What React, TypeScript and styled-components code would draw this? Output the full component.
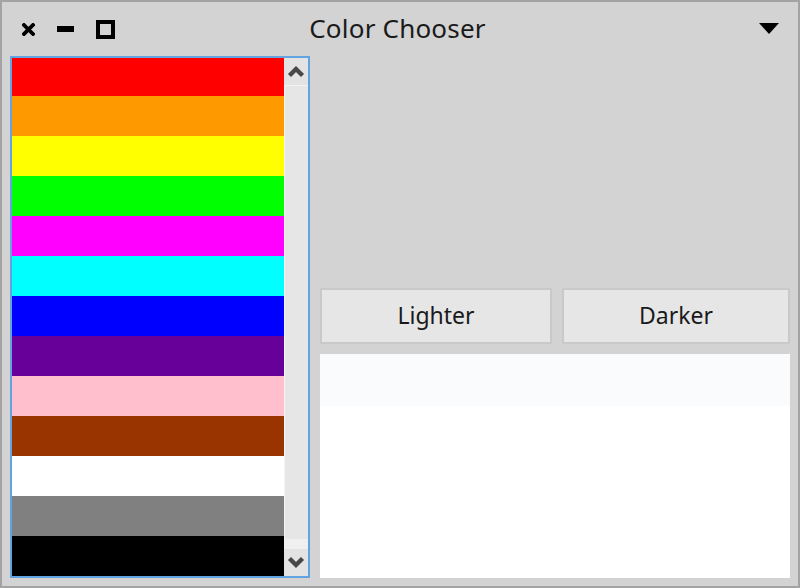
import styled, { createGlobalStyle } from 'styled-components';

const GlobalStyle = createGlobalStyle`
  html, body {
    margin: 0;
    padding: 0;
    background: #d4d4d4;
  }
  * {
    box-sizing: border-box;
  }
`;

const swatches = [
  '#ff0000',
  '#ff9900',
  '#ffff00',
  '#00ff00',
  '#ff00ff',
  '#00ffff',
  '#0000ff',
  '#660099',
  '#ffbfcc',
  '#993300',
  '#ffffff',
  '#808080',
  '#000000',
];

const Window = styled.div`
  width: 800px;
  height: 588px;
  border: 2px solid #a3a3a3;
  background: #d3d3d3;
  display: flex;
  flex-direction: column;
  font-family: 'Noto Sans', sans-serif;
  color: #1a1a1a;
`;

const TitleBar = styled.div`
  height: 54px;
  display: grid;
  grid-template-columns: 1fr auto 1fr;
  align-items: center;
  padding: 0 19px 0 20px;
`;

const Controls = styled.div`
  display: flex;
  align-items: center;
  gap: 22px;
`;

const Title = styled.div`
  font-size: 26px;
  letter-spacing: 0.2px;
  margin-right: 6px;
  margin-top: -2px;
`;

const MenuSlot = styled.div`
  display: flex;
  justify-content: flex-end;
`;

const Body = styled.div`
  flex: 1;
  display: flex;
  gap: 10px;
  padding: 0 8px 8px 8px;
`;

const ListBox = styled.div`
  width: 300px;
  border: 2px solid #63a3e2;
  display: flex;
  overflow: hidden;
`;

const Rows = styled.div`
  flex: 1;
  display: flex;
  flex-direction: column;
  margin-top: -2px;
`;

const Swatch = styled.div<{ $color: string }>`
  height: 40px;
  flex-shrink: 0;
  background: ${(p) => p.$color};
`;

const ScrollBar = styled.div`
  width: 24px;
  display: flex;
  flex-direction: column;
  background: #e6e6e6;
`;

const ScrollButton = styled.div`
  height: 27px;
  display: flex;
  align-items: center;
  justify-content: center;
  background: #e3e3e3;
`;

const Thumb = styled.div`
  flex: 1;
  background: #e6e6e6;
  border-top: 1px solid #f4f4f4;
  border-left: 1px solid #f4f4f4;
`;

const Track = styled.div`
  height: 10px;
  background: #f0f0f0;
`;

const RightPane = styled.div`
  flex: 1;
  display: flex;
  flex-direction: column;
`;

const Preview = styled.div`
  flex: 1;
`;

const ButtonRow = styled.div`
  display: flex;
  gap: 10px;
  margin-bottom: 10px;
`;

const Button = styled.div<{ $grow: number }>`
  flex: ${(p) => p.$grow} 1 0;
  height: 56px;
  background: #e6e6e6;
  border: 2px solid #c9c9c9;
  display: flex;
  align-items: center;
  justify-content: center;
  font-size: 23px;
  padding-bottom: 2px;
`;

const ResultList = styled.div`
  height: 224px;
  background: #ffffff;
`;

const ResultRow = styled.div`
  height: 52px;
  background: #fafbfd;
`;

const CloseIcon = () => (
  <svg width="13" height="13" viewBox="0 0 13 13">
    <path d="M2 2 L11 11 M11 2 L2 11" stroke="#000" strokeWidth="3.8" strokeLinecap="square" />
  </svg>
);

const MinIcon = () => (
  <svg width="17" height="6" viewBox="0 0 17 6">
    <rect x="0" y="0" width="17" height="6" fill="#000" />
  </svg>
);

const MaxIcon = () => (
  <svg width="19" height="19" viewBox="0 0 19 19">
    <rect x="2" y="2" width="15" height="15" fill="none" stroke="#000" strokeWidth="4" />
  </svg>
);

const MenuIcon = () => (
  <svg width="20" height="12" viewBox="0 0 20 12">
    <path d="M0 0 H20 L10 11 Z" fill="#000" />
  </svg>
);

const Chevron = ({ up }: { up?: boolean }) => (
  <svg width="18" height="13" viewBox="0 0 18 13">
    <path
      d={up ? 'M2.5 10.5 L9 4 L15.5 10.5' : 'M2.5 2.5 L9 9 L15.5 2.5'}
      fill="none"
      stroke="#474747"
      strokeWidth="4.4"
    />
  </svg>
);

const App = () => {
  return (
    <>
      <GlobalStyle />
      <Window>
        <TitleBar>
          <Controls>
            <CloseIcon />
            <MinIcon />
            <MaxIcon />
          </Controls>
          <Title>Color Chooser</Title>
          <MenuSlot>
            <MenuIcon />
          </MenuSlot>
        </TitleBar>
        <Body>
          <ListBox>
            <Rows>
              {swatches.map((c) => (
                <Swatch key={c} $color={c} />
              ))}
            </Rows>
            <ScrollBar>
              <ScrollButton>
                <Chevron up />
              </ScrollButton>
              <Thumb />
              <Track />
              <ScrollButton>
                <Chevron />
              </ScrollButton>
            </ScrollBar>
          </ListBox>
          <RightPane>
            <Preview />
            <ButtonRow>
              <Button $grow={232}>Lighter</Button>
              <Button $grow={228}>Darker</Button>
            </ButtonRow>
            <ResultList>
              <ResultRow />
            </ResultList>
          </RightPane>
        </Body>
      </Window>
    </>
  );
};

export default App;
